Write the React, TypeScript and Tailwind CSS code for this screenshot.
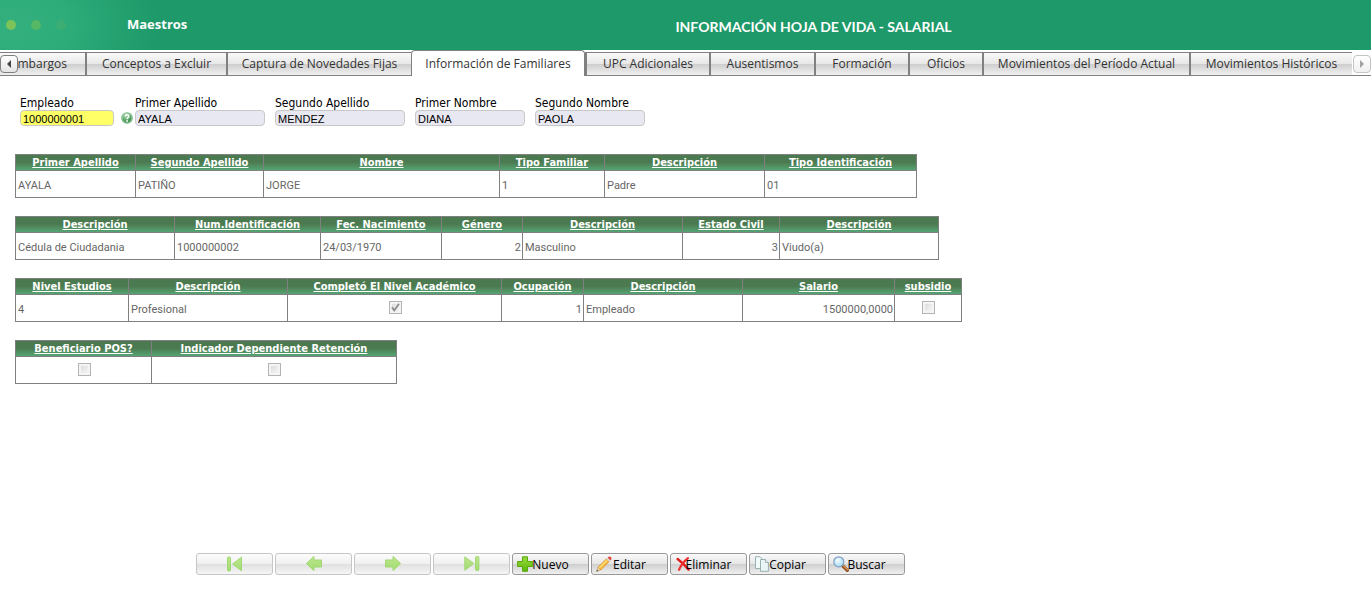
import React from "react";

type Align = "left" | "right" | "check";
type Col = { title: string; width: string; value?: string; align?: Align; checked?: boolean };

const tabs: { label: string; width: string; active?: boolean }[] = [
  { label: "Conceptos a Excluir", width: "w-[141px]" },
  { label: "Captura de Novedades Fijas", width: "w-[185px]" },
  { label: "Información de Familiares", width: "w-[174px]", active: true },
  { label: "UPC Adicionales", width: "w-[124px]" },
  { label: "Ausentismos", width: "w-[105px]" },
  { label: "Formación", width: "w-[94px]" },
  { label: "Oficios", width: "w-[74px]" },
  { label: "Movimientos del Período Actual", width: "w-[207px]" },
  { label: "Movimientos Históricos", width: "w-[163px]" },
];

const fields = [
  { id: "empleado", label: "Empleado", value: "1000000001", box: "w-[115px]", input: "w-[94px] bg-[#ffff66]", help: true },
  { id: "apellido1", label: "Primer Apellido", value: "AYALA", box: "w-[140px]", input: "w-[130px] bg-[#e8e8f2]" },
  { id: "apellido2", label: "Segundo Apellido", value: "MENDEZ", box: "w-[140px]", input: "w-[130px] bg-[#e8e8f2]" },
  { id: "nombre1", label: "Primer Nombre", value: "DIANA", box: "w-[120px]", input: "w-[110px] bg-[#e8e8f2]" },
  { id: "nombre2", label: "Segundo Nombre", value: "PAOLA", box: "w-[120px]", input: "w-[110px] bg-[#e8e8f2]" },
];

const tables: { width: string; cols: Col[] }[] = [
  {
    width: "w-[902px]",
    cols: [
      { title: "Primer Apellido", width: "w-[120px]", value: "AYALA" },
      { title: "Segundo Apellido", width: "w-[128px]", value: "PATIÑO" },
      { title: "Nombre", width: "w-[236px]", value: "JORGE" },
      { title: "Tipo Familiar", width: "w-[105px]", value: "1" },
      { title: "Descripción", width: "w-[160px]", value: "Padre" },
      { title: "Tipo Identificación", width: "w-[152px]", value: "01" },
    ],
  },
  {
    width: "w-[924px]",
    cols: [
      { title: "Descripción", width: "w-[159px]", value: "Cédula de Ciudadania" },
      { title: "Num.Identificación", width: "w-[146px]", value: "1000000002" },
      { title: "Fec. Nacimiento", width: "w-[121px]", value: "24/03/1970" },
      { title: "Género", width: "w-[81px]", value: "2", align: "right" },
      { title: "Descripción", width: "w-[160px]", value: "Masculino" },
      { title: "Estado Civil", width: "w-[97px]", value: "3", align: "right" },
      { title: "Descripción", width: "w-[159px]", value: "Viudo(a)" },
    ],
  },
  {
    width: "w-[947px]",
    cols: [
      { title: "Nivel Estudios", width: "w-[113px]", value: "4" },
      { title: "Descripción", width: "w-[159px]", value: "Profesional" },
      { title: "Completó El Nivel Académico", width: "w-[214px]", align: "check", checked: true },
      { title: "Ocupación", width: "w-[82px]", value: "1", align: "right" },
      { title: "Descripción", width: "w-[159px]", value: "Empleado" },
      { title: "Salario", width: "w-[152px]", value: "1500000,0000", align: "right" },
      { title: "subsidio", width: "w-[67px]", align: "check" },
    ],
  },
  {
    width: "w-[382px]",
    cols: [
      { title: "Beneficiario POS?", width: "w-[136px]", align: "check" },
      { title: "Indicador Dependiente Retención", width: "w-[245px]", align: "check" },
    ],
  },
];

const cellAlign: Record<Align, string> = {
  left: "pt-[3px] pb-0 pl-[2px] pr-[2px] text-left",
  right: "pt-[3px] pb-0 pl-[2px] pr-px text-right",
  check: "pt-0 pb-[2px] pl-[2px] pr-px",
};

function Checkbox({ label, checked }: { label: string; checked?: boolean }) {
  return (
    <span className="mx-auto grid h-[13px] w-[13px]">
      <input
        type="checkbox"
        disabled
        defaultChecked={checked}
        aria-label={label}
        className="col-start-1 row-start-1 m-0 h-[13px] w-[13px] appearance-none border border-[#b4b4b4] bg-linear-to-br from-[#d8d8d8] to-[#fafafa] shadow-[inset_0_0_0_2px_#f4f4f4]"
      />
      {checked && (
        <svg viewBox="0 0 13 13" className="pointer-events-none col-start-1 row-start-1 h-[13px] w-[13px]" aria-hidden="true">
          <path d="M3 6.2 L5.3 9.4 L10 2.8" fill="none" stroke="#8c8c8c" strokeWidth="1.8" />
        </svg>
      )}
    </span>
  );
}

function Grid({ width, cols }: { width: string; cols: Col[] }) {
  return (
    <table className={`${width} table-fixed border-collapse border border-[#808080] text-[11px]`}>
      <thead>
        <tr className="h-4 bg-linear-to-b from-[#4c7a50] from-45% to-[#55aa78]">
          {cols.map((c, i) => (
            <th key={i} className={`${c.width} h-4 overflow-hidden whitespace-nowrap border border-[#808080] px-0 pb-0 pt-px text-center align-middle font-bold leading-[14px] text-white underline`}>
              {c.title}
            </th>
          ))}
        </tr>
      </thead>
      <tbody>
        <tr>
          {cols.map((c, i) => (
            <td key={i} className={`h-[27px] whitespace-nowrap border border-[#808080] align-middle font-['Roboto',sans-serif] leading-4 text-[#666666] ${cellAlign[c.align ?? "left"]}`}>
              {c.align === "check" ? <Checkbox label={c.title} checked={c.checked} /> : c.value}
            </td>
          ))}
        </tr>
      </tbody>
    </table>
  );
}

const arrow = { fill: "url(#lime)", stroke: "#a0d974", strokeWidth: 1 };

function First() {
  return (
    <svg viewBox="0 0 16 16" className="h-4 w-4" aria-hidden="true">
      <rect x="0.5" y="1" width="3" height="14" rx="1" {...arrow} />
      <path d="M14.5 1.2 V14.8 L5.6 8 Z" {...arrow} />
    </svg>
  );
}
function Prev() {
  return (
    <svg viewBox="0 0 16 16" className="h-4 w-4" aria-hidden="true">
      <path d="M0.4 7.5 L8 0.4 V4 H15.5 V11 H8 V14.6 Z" {...arrow} />
    </svg>
  );
}
function Next() {
  return (
    <svg viewBox="0 0 16 16" className="h-4 w-4" aria-hidden="true">
      <path d="M15.6 7.5 L8 0.4 V4 H0.5 V11 H8 V14.6 Z" {...arrow} />
    </svg>
  );
}
function Last() {
  return (
    <svg viewBox="0 0 16 16" className="h-4 w-4" aria-hidden="true">
      <path d="M0.8 0.8 V14.2 L9.8 7.5 Z" {...arrow} />
      <rect x="11.5" y="0.5" width="3.4" height="14" rx="1" {...arrow} />
    </svg>
  );
}
function Plus() {
  return (
    <svg viewBox="0 0 16 16" className="h-4 w-4" aria-hidden="true">
      <path d="M5.5 0.8 H10.5 V5.5 H15.4 V10.5 H10.5 V15.3 H5.5 V10.5 H0.6 V5.5 H5.5 Z" fill="url(#leaf)" stroke="#58a80c" strokeLinejoin="round" />
    </svg>
  );
}
function Pencil() {
  return (
    <svg viewBox="0 0 16 16" className="h-4 w-4" aria-hidden="true">
      <path d="M0.6 15.4 L2 11.2 L4.8 14 Z" fill="#f3d9ae" stroke="#b98a4a" strokeWidth="0.5" />
      <path d="M0.4 15.6 L1.1 13.6 L2.4 14.9 Z" fill="#444" />
      <path d="M2 11.2 L10.4 2.8 L13.2 5.6 L4.8 14 Z" fill="#f8b83c" stroke="#d18a1c" strokeWidth="0.6" />
      <path d="M3.3 12 L11.2 4" stroke="#fde08a" strokeWidth="1.1" />
      <path d="M10.4 2.8 L11.6 1.6 L14.4 4.4 L13.2 5.6 Z" fill="#d9dde2" />
      <path d="M11.6 1.6 Q13.2 -0.2 14.9 1.1 Q16.3 2.6 14.4 4.4 Z" fill="#e0483c" />
    </svg>
  );
}
function Cross() {
  return (
    <svg viewBox="0 0 16 16" className="h-4 w-4" aria-hidden="true">
      <path d="M2.6 3 Q8 7 13.6 13.6" fill="none" stroke="#e01c1c" strokeWidth="2.4" strokeLinecap="round" />
      <path d="M13 2.2 Q7.4 6.4 4 13.8" fill="none" stroke="#f03030" strokeWidth="2.2" strokeLinecap="round" />
    </svg>
  );
}
function Pages() {
  return (
    <svg viewBox="0 0 16 16" className="h-4 w-4" aria-hidden="true">
      <path d="M1.5 0.7 H6 L8.5 3.2 V12.5 H1.5 Z" fill="#f2f9f9" stroke="#8fa9ab" strokeWidth="0.9" />
      <path d="M6.5 3.5 H11.3 L14.4 6.5 V15.3 H6.5 Z" fill="#eaf5f5" stroke="#8fa9ab" strokeWidth="0.9" />
      <path d="M11.3 3.5 V6.5 H14.4" fill="#fff" stroke="#8fa9ab" strokeWidth="0.9" />
    </svg>
  );
}
function Lens() {
  return (
    <svg viewBox="0 0 16 16" className="h-4 w-4" aria-hidden="true">
      <path d="M9.8 9.8 L14.3 14.3" stroke="#8a4a1c" strokeWidth="3.2" strokeLinecap="round" />
      <path d="M10.2 9.6 L14.4 13.8" stroke="#e0954e" strokeWidth="1.3" strokeLinecap="round" />
      <circle cx="5.8" cy="5.8" r="5" fill="url(#glass)" stroke="#7f9fc4" strokeWidth="1.2" />
    </svg>
  );
}

const navButtons = [
  { name: "Primero", icon: <First /> },
  { name: "Anterior", icon: <Prev /> },
  { name: "Siguiente", icon: <Next /> },
  { name: "Último", icon: <Last /> },
];
const actionButtons = [
  { name: "Nuevo", icon: <Plus /> },
  { name: "Editar", icon: <Pencil /> },
  { name: "Eliminar", icon: <Cross /> },
  { name: "Copiar", icon: <Pages /> },
  { name: "Buscar", icon: <Lens /> },
];

export default function App() {
  return (
    <div className="flex min-h-screen flex-col bg-white font-['DejaVu_Sans_Condensed','DejaVu_Sans',sans-serif]">
      <svg className="absolute h-0 w-0" aria-hidden="true">
        <defs>
          <linearGradient id="lime" x1="0" y1="0" x2="0" y2="1">
            <stop offset="0" stopColor="#c0e58e" />
            <stop offset="1" stopColor="#9fdc70" />
          </linearGradient>
          <linearGradient id="leaf" x1="0" y1="0" x2="0" y2="1">
            <stop offset="0" stopColor="#9adb3c" />
            <stop offset="1" stopColor="#5cb80c" />
          </linearGradient>
          <radialGradient id="glass" cx="0.4" cy="0.35" r="0.7">
            <stop offset="0" stopColor="#f4fcff" />
            <stop offset="1" stopColor="#9fd8f4" />
          </radialGradient>
          <radialGradient id="orb" cx="0.4" cy="0.25" r="0.8">
            <stop offset="0" stopColor="#a9dcae" />
            <stop offset="1" stopColor="#28803c" />
          </radialGradient>
        </defs>
      </svg>

      <header className="flex h-[50px] items-center bg-[#1e9969] bg-[radial-gradient(ellipse_150px_90px_at_10px_25px,#34b07f_0%,#2dab79_40%,#1e9969_100%)] text-white">
        <div className="flex w-[127px] shrink-0 gap-[15px] pl-[6px]">
          <span className="h-[10px] w-[10px] rounded-full bg-[#7cc35a]" />
          <span className="h-[10px] w-[10px] rounded-full bg-[#56b764]" />
          <span className="h-[10px] w-[10px] rounded-full bg-[#3cae74]" />
        </div>
        <div className="w-[40%] shrink-0 pb-[2px] font-['Open_Sans',sans-serif] text-[13px] font-bold leading-5">Maestros</div>
        <h1 className="whitespace-nowrap pt-1 font-['Lato',sans-serif] text-[14px] font-bold leading-5">
          INFORMACIÓN HOJA DE VIDA - SALARIAL
        </h1>
      </header>

      <nav className="relative flex h-[26px] overflow-hidden font-['Open_Sans',sans-serif] text-[12px] text-[#333333]">
        <button className="mt-[2px] h-6 w-[85px] shrink-0 border-y border-[#808080] bg-[linear-gradient(to_bottom,#fafafa_0%,#e8e8e8_48%,#cfcfcf_52%,#f0f0f0_100%)] pb-px pr-[18px] text-right">
          Embargos
        </button>
        {tabs.map((t) => (
          <button
            key={t.label}
            className={
              t.active
                ? `${t.width} h-[26px] shrink-0 whitespace-nowrap rounded-t border-l border-r border-t border-[#808080] bg-white`
                : `${t.width} mt-[2px] h-6 shrink-0 whitespace-nowrap border-l-2 border-y border-[#808080] bg-[linear-gradient(to_bottom,#fafafa_0%,#e8e8e8_48%,#cfcfcf_52%,#f0f0f0_100%)] pb-px`
            }
          >
            {t.label}
          </button>
        ))}
        <div className="flex-1 border-b border-[#808080]" />
        <button aria-label="Anteriores" className="absolute left-0 top-[5px] grid h-[18px] w-[18px] place-items-center rounded-sm border border-[#808080] bg-linear-to-b from-white to-[#e4e4e4]">
          <svg viewBox="0 0 8 10" className="h-[10px] w-2" aria-hidden="true"><path d="M6 1 V9 L2 5 Z" fill="#444" /></svg>
        </button>
        <button aria-label="Siguientes" disabled className="absolute right-0 top-[5px] grid h-[18px] w-[18px] place-items-center rounded-sm border border-[#c4c4c4] bg-linear-to-b from-white to-[#f0f0f0]">
          <svg viewBox="0 0 8 10" className="h-[10px] w-2" aria-hidden="true"><path d="M2 1 V9 L6 5 Z" fill="#a0a0a0" /></svg>
        </button>
      </nav>

      <main className="flex-1">
        <form className="flex pl-5 pt-5 text-[12px] text-black">
          {fields.map((f) => (
            <div key={f.id} className={`${f.box} shrink-0`}>
              <label htmlFor={f.id} className="block whitespace-nowrap leading-[14px]">{f.label}</label>
              <div className="flex items-center justify-between">
                <input id={f.id} defaultValue={f.value} className={`${f.input} h-4 rounded border border-[#c8c8c8] px-[2px] pt-[2px] font-['Liberation_Sans',sans-serif] text-[11px]`} />
                {f.help && (
                  <button type="button" aria-label="Ayuda" className="mr-[2px] grid h-3 w-3 place-items-center">
                    <svg viewBox="0 0 12 12" className="h-3 w-3" aria-hidden="true">
                      <circle cx="6" cy="6" r="5.8" fill="#5fae70" />
                      <circle cx="6" cy="6" r="4.9" fill="url(#orb)" stroke="#d8efda" strokeWidth="0.5" />
                      <path d="M4.1 4.5 Q4.3 2.8 6.1 2.8 Q7.9 2.9 7.8 4.4 Q7.7 5.3 6.7 5.8 Q6.1 6.2 6.1 7.2" fill="none" stroke="#fff" strokeWidth="1.4" />
                      <circle cx="6.1" cy="9" r="0.9" fill="#fff" />
                    </svg>
                  </button>
                )}
              </div>
            </div>
          ))}
        </form>
        <div className="flex flex-col gap-[18px] pl-[15px] pt-7">
          {tables.map((t, i) => (
            <Grid key={i} {...t} />
          ))}
        </div>
      </main>

      <footer className="flex gap-[2px] pb-[19px] pl-[196px] font-['Open_Sans',sans-serif] text-[12px] text-black">
        {navButtons.map((b) => (
          <button key={b.name} aria-label={b.name} disabled className="grid h-[22px] w-[77px] place-items-center rounded-[3px] border border-[#c6c6c6] bg-[linear-gradient(to_bottom,#fcfcfc_0%,#f0f0f0_48%,#e0e0e0_52%,#f6f6f6_100%)]">
            {b.icon}
          </button>
        ))}
        {actionButtons.map((b) => (
          <button key={b.name} className="grid h-[22px] w-[77px] items-center rounded-[3px] border border-[#999999] bg-[linear-gradient(to_bottom,#fafafa_0%,#e6e6e6_48%,#cfcfcf_52%,#f0f0f0_100%)]">
            <span className="col-start-1 row-start-1 justify-self-start pl-1">{b.icon}</span>
            <span className="col-start-1 row-start-1 justify-self-center pt-[2px] leading-4">{b.name}</span>
          </button>
        ))}
      </footer>
    </div>
  );
}
